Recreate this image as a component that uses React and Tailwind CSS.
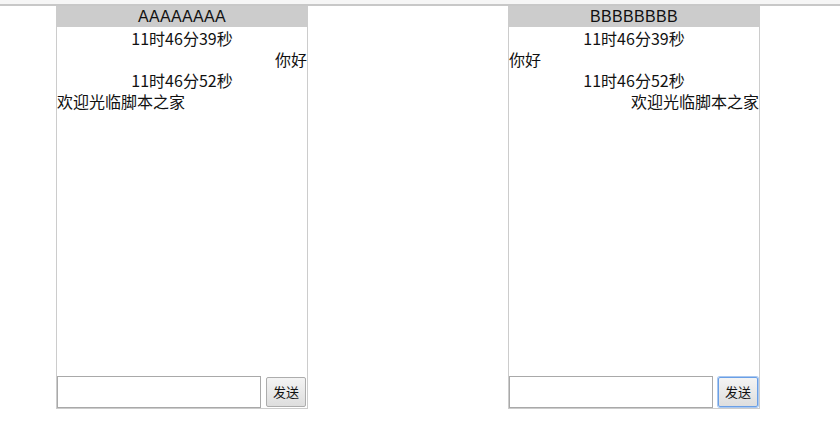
import React from 'react';

const font = { fontFamily: '"Noto Sans CJK SC", "Noto Sans", sans-serif' };

function ChatBox({ name, messages, focused }) {
  return (
    <div className="w-[252px] h-[403px] border border-[#cccccc] flex flex-col bg-white">
      <div className="h-[20px] bg-[#cccccc] flex items-center justify-center">
        <span className="block font-['Liberation_Sans',Arial,sans-serif] text-[16px] leading-[18px] tracking-[0.3px] text-[#111]">
          {name}
        </span>
      </div>
      <div className="flex-1 pt-[1px] text-[16px] leading-[21px] text-[#111]">
        {messages.map((m, i) => (
          <div key={i} className={m.align === 'center' ? 'text-center' : m.align === 'right' ? 'text-right' : 'text-left'}>
            {m.text}
          </div>
        ))}
      </div>
      <div className="flex items-center justify-between pr-[1px]">
        <input className="w-[204px] h-[32px] border border-[#a9a9a9] bg-white outline-none" />
        <button
          className={
            'w-[40px] h-[30px] rounded-[2px] text-[13px] text-[#111] bg-gradient-to-b from-[#f4f4f4] to-[#dedede] ' +
            (focused ? 'border border-[#6a9fe6] ring-1 ring-[#aac8f0]' : 'border border-[#adadad]')
          }
        >
          发送
        </button>
      </div>
    </div>
  );
}

export default function App() {
  return (
    <div className="w-[840px] h-[445px] bg-white overflow-hidden" style={font}>
      <div className="h-[4px] bg-[#f6f6f6]" />
      <div className="h-[2px] bg-[#c8c8c8]" />
      <div className="flex pl-[56px] gap-[200px]">
        <ChatBox
          name="AAAAAAAA"
          messages={[
            { text: '11时46分39秒', align: 'center' },
            { text: '你好', align: 'right' },
            { text: '11时46分52秒', align: 'center' },
            { text: '欢迎光临脚本之家', align: 'left' },
          ]}
        />
        <ChatBox
          name="BBBBBBBB"
          focused
          messages={[
            { text: '11时46分39秒', align: 'center' },
            { text: '你好', align: 'left' },
            { text: '11时46分52秒', align: 'center' },
            { text: '欢迎光临脚本之家', align: 'right' },
          ]}
        />
      </div>
    </div>
  );
}
